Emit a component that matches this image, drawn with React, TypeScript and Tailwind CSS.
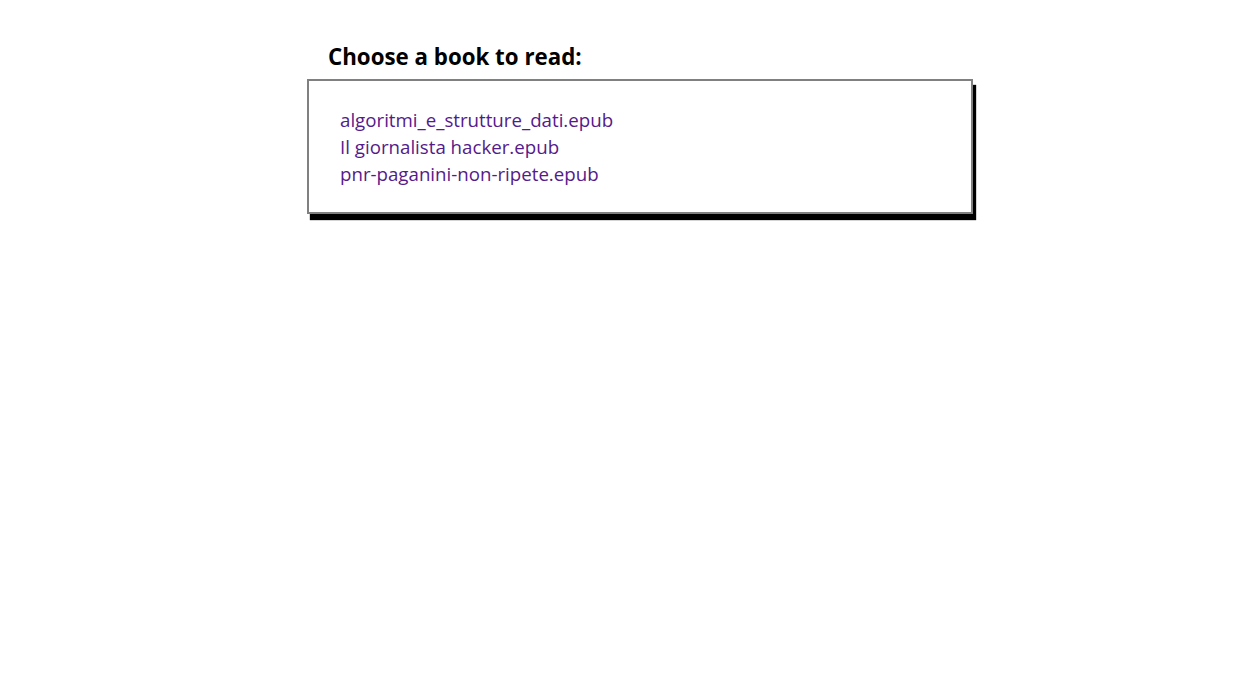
export default function App() {
  const books = [
    "algoritmi_e_strutture_dati.epub",
    "Il giornalista hacker.epub",
    "pnr-paganini-non-ripete.epub",
  ];

  return (
    <div className="min-h-screen bg-white font-['Open_Sans',sans-serif] text-black">
      <div className="ml-[307px] w-[666px] pt-[41px]">
        <h1 className="pl-[21px] text-[22.3px] leading-[31px] font-bold">
          Choose a book to read:
        </h1>
        <div className="mt-[7px] border-2 border-[#808080] bg-white shadow-[3px_6px_1px_#000] pl-[31px] pt-[25px] pb-[25px]">
          <ul>
            {books.map((book) => (
              <li key={book} className="text-[18.7px] leading-[27px]">
                <a href="#" className="text-[#551a8b]">
                  {book}
                </a>
              </li>
            ))}
          </ul>
        </div>
      </div>
    </div>
  );
}
